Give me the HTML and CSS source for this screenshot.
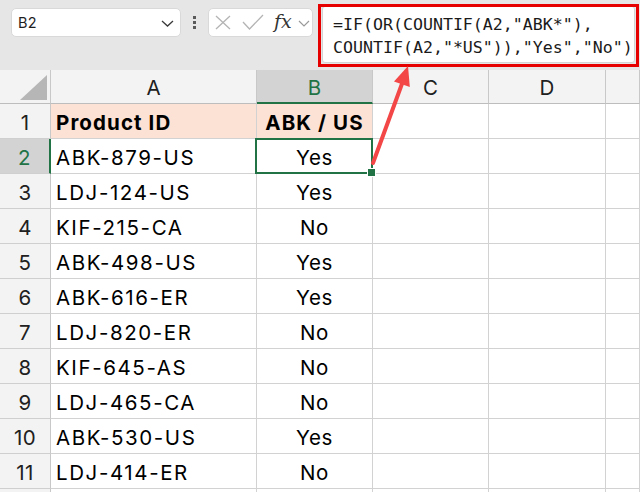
FILE: index.html
```html
<!DOCTYPE html>
<html>
<head>
<meta charset="utf-8">
<link rel="stylesheet" href="styles.css">
</head>
<body>
<div class="app">
  <div class="topbar">
    <div class="namebox">
      <span class="ref">B2</span>
      <svg class="chev" width="13" height="7" viewBox="0 0 13 7"><path d="M1 1 L6.5 6 L12 1" fill="none" stroke="#3a3a3a" stroke-width="1.3"/></svg>
    </div>
    <div class="dots"><i></i><i></i><i></i></div>
    <div class="fxbox">
      <svg class="ico-x" width="16" height="15" viewBox="0 0 16 15"><path d="M1 1 L15 14 M15 1 L1 14" fill="none" stroke="#b4b4b4" stroke-width="1.3"/></svg>
      <svg class="ico-check" width="22" height="16" viewBox="0 0 22 16"><path d="M1 8 L7.5 15 L21 1" fill="none" stroke="#b4b4b4" stroke-width="1.3"/></svg>
      <span class="fx">fx</span>
      <svg class="chev2" width="12" height="7" viewBox="0 0 12 7"><path d="M1 1 L6 6 L11 1" fill="none" stroke="#9a9a9a" stroke-width="1.2"/></svg>
    </div>
    <div class="formula">=IF(OR(COUNTIF(A2,"ABK*"),<br>COUNTIF(A2,"*US")),"Yes","No")</div>
  </div>

  <div class="sheet">
    <div class="ch corner"><span class="tri"></span></div>
    <div class="ch">A</div>
    <div class="ch chsel">B</div>
    <div class="ch">C</div>
    <div class="ch">D</div>
    <div class="ch"></div>

    <div class="rh">1</div>
    <div class="c hd left">Product ID</div>
    <div class="c hd mid">ABK / US</div>
    <div class="c"></div><div class="c"></div><div class="c"></div>

    <div class="rh rhsel">2</div>
    <div class="c left">ABK-879-US</div>
    <div class="c mid sel">Yes</div>
    <div class="c"></div><div class="c"></div><div class="c"></div>

    <div class="rh">3</div>
    <div class="c left">LDJ-124-US</div>
    <div class="c mid">Yes</div>
    <div class="c"></div><div class="c"></div><div class="c"></div>

    <div class="rh">4</div>
    <div class="c left">KIF-215-CA</div>
    <div class="c mid">No</div>
    <div class="c"></div><div class="c"></div><div class="c"></div>

    <div class="rh">5</div>
    <div class="c left">ABK-498-US</div>
    <div class="c mid">Yes</div>
    <div class="c"></div><div class="c"></div><div class="c"></div>

    <div class="rh">6</div>
    <div class="c left">ABK-616-ER</div>
    <div class="c mid">Yes</div>
    <div class="c"></div><div class="c"></div><div class="c"></div>

    <div class="rh">7</div>
    <div class="c left">LDJ-820-ER</div>
    <div class="c mid">No</div>
    <div class="c"></div><div class="c"></div><div class="c"></div>

    <div class="rh">8</div>
    <div class="c left">KIF-645-AS</div>
    <div class="c mid">No</div>
    <div class="c"></div><div class="c"></div><div class="c"></div>

    <div class="rh">9</div>
    <div class="c left">LDJ-465-CA</div>
    <div class="c mid">No</div>
    <div class="c"></div><div class="c"></div><div class="c"></div>

    <div class="rh">10</div>
    <div class="c left">ABK-530-US</div>
    <div class="c mid">Yes</div>
    <div class="c"></div><div class="c"></div><div class="c"></div>

    <div class="rh">11</div>
    <div class="c left">LDJ-414-ER</div>
    <div class="c mid">No</div>
    <div class="c"></div><div class="c"></div><div class="c"></div>

    <div class="rh"></div>
    <div class="c"></div><div class="c"></div><div class="c"></div><div class="c"></div><div class="c"></div>
  </div>

  <div class="callout"></div>
  <svg class="arrow" width="640" height="492" viewBox="0 0 640 492">
    <line x1="373" y1="163" x2="403" y2="81" stroke="#f34646" stroke-width="4" stroke-linecap="round"/>
    <polygon points="408,66 409.8,87 394,81.5" fill="#f34646"/>
  </svg>
</div>
</body>
</html>
```

FILE: styles.css
```css
* { box-sizing: border-box; }
html, body { margin: 0; padding: 0; }
body {
  width: 640px;
  height: 492px;
  overflow: hidden;
  background: #ffffff;
  font-family: Inter, "Noto Sans", sans-serif;
}
.app {
  position: relative;
  width: 640px;
  height: 492px;
  overflow: hidden;
}

/* ---------- top bar ---------- */
.topbar {
  height: 70px;
  background: #e6e6e6;
  display: flex;
  align-items: flex-start;
  padding-top: 8px;
}
.namebox {
  margin-left: 11px;
  width: 170px;
  height: 29px;
  background: #fff;
  border: 1px solid #d9d9d9;
  border-radius: 5px;
  display: flex;
  align-items: center;
  justify-content: space-between;
  padding: 0 6px 0 6px;
}
.ref {
  font-size: 14.5px;
  color: #1e1e1e;
  letter-spacing: 0.2px;
}
.chev { margin-top: 2px; }
.dots {
  width: 27px;
  height: 29px;
  display: flex;
  flex-direction: column;
  align-items: center;
  justify-content: center;
  gap: 2px;
}
.dots i {
  display: block;
  width: 3px;
  height: 3px;
  background: #5a5a5a;
}
.fxbox {
  width: 105px;
  height: 29px;
  background: #fff;
  border: 1px solid #d9d9d9;
  border-radius: 5px;
  display: flex;
  align-items: center;
  padding-left: 6px;
}
.ico-check { margin-left: 11px; margin-top: -1px; }
.fx {
  margin-left: 10px;
  font-family: "DejaVu Serif", "Liberation Serif", serif;
  font-style: italic;
  font-size: 19px;
  color: #333;
  line-height: 1;
  margin-top: -2px;
}
.chev2 { margin-left: 6px; margin-top: 2px; }

.formula {
  margin-left: 9px;
  margin-top: -2px;
  width: 313px;
  height: 57px;
  background: #fff;
  border: 1px solid #d4d4d4;
  border-radius: 3px;
  padding: 7px 0 0 10px;
  font-family: "DejaVu Sans Mono", "Liberation Mono", monospace;
  font-size: 16.6px;
  line-height: 22.5px;
  color: #1a1a1a;
  white-space: nowrap;
}

/* ---------- sheet ---------- */
.sheet {
  display: grid;
  grid-template-columns: 51px 206px 116px 116px 117px 34px;
  grid-template-rows: 34px repeat(12, 35px);
  font-size: 20.5px;
}
.sheet > div {
  border-right: 1px solid #d2d2d2;
  border-bottom: 1px solid #d2d2d2;
  display: flex;
  align-items: center;
  white-space: nowrap;
}
.ch {
  background: #f3f3f3;
  justify-content: center;
  color: #202020;
  padding-top: 2px;
  border-right-color: #c8c8c8 !important;
  border-bottom-color: #bdbdbd !important;
}
.corner { position: relative; }
.tri {
  position: absolute;
  right: 3px;
  bottom: 3px;
  width: 27px;
  height: 25px;
  background: #b6b6b6;
  clip-path: polygon(100% 0, 100% 100%, 0 100%);
}
.chsel {
  background: #d3d3d3;
  color: #217346;
  border-bottom: 2px solid #217346 !important;
}
.rh {
  background: #f3f3f3;
  justify-content: center;
  color: #202020;
  padding-top: 2px;
  letter-spacing: 0.4px;
  border-right-color: #c8c8c8 !important;
  border-bottom-color: #cfcfcf !important;
}
.rhsel {
  background: #d3d3d3;
  color: #217346;
  border-right: 2px solid #217346 !important;
}
.c {
  color: #000;
  padding-top: 3px;
}
.left { padding-left: 5px; letter-spacing: 1.6px; }
.mid { justify-content: center; letter-spacing: 0.6px; }
.hd {
  background: #fbe2d5;
  font-weight: 700;
  letter-spacing: 1.1px;
}
.sel { position: relative; }
.sel::after {
  content: "";
  position: absolute;
  left: -2px;
  top: -1px;
  right: -1px;
  bottom: -1px;
  border: 2px solid #217346;
}
.sel::before {
  content: "";
  position: absolute;
  right: -4px;
  bottom: -4px;
  width: 7px;
  height: 7px;
  background: #217346;
  border: 1px solid #fff;
  z-index: 2;
}

/* ---------- annotation ---------- */
.callout {
  position: absolute;
  left: 318px;
  top: 4px;
  width: 321px;
  height: 63px;
  border: 3px solid #e60000;
}
.arrow {
  position: absolute;
  left: 0;
  top: 0;
  pointer-events: none;
}
```
